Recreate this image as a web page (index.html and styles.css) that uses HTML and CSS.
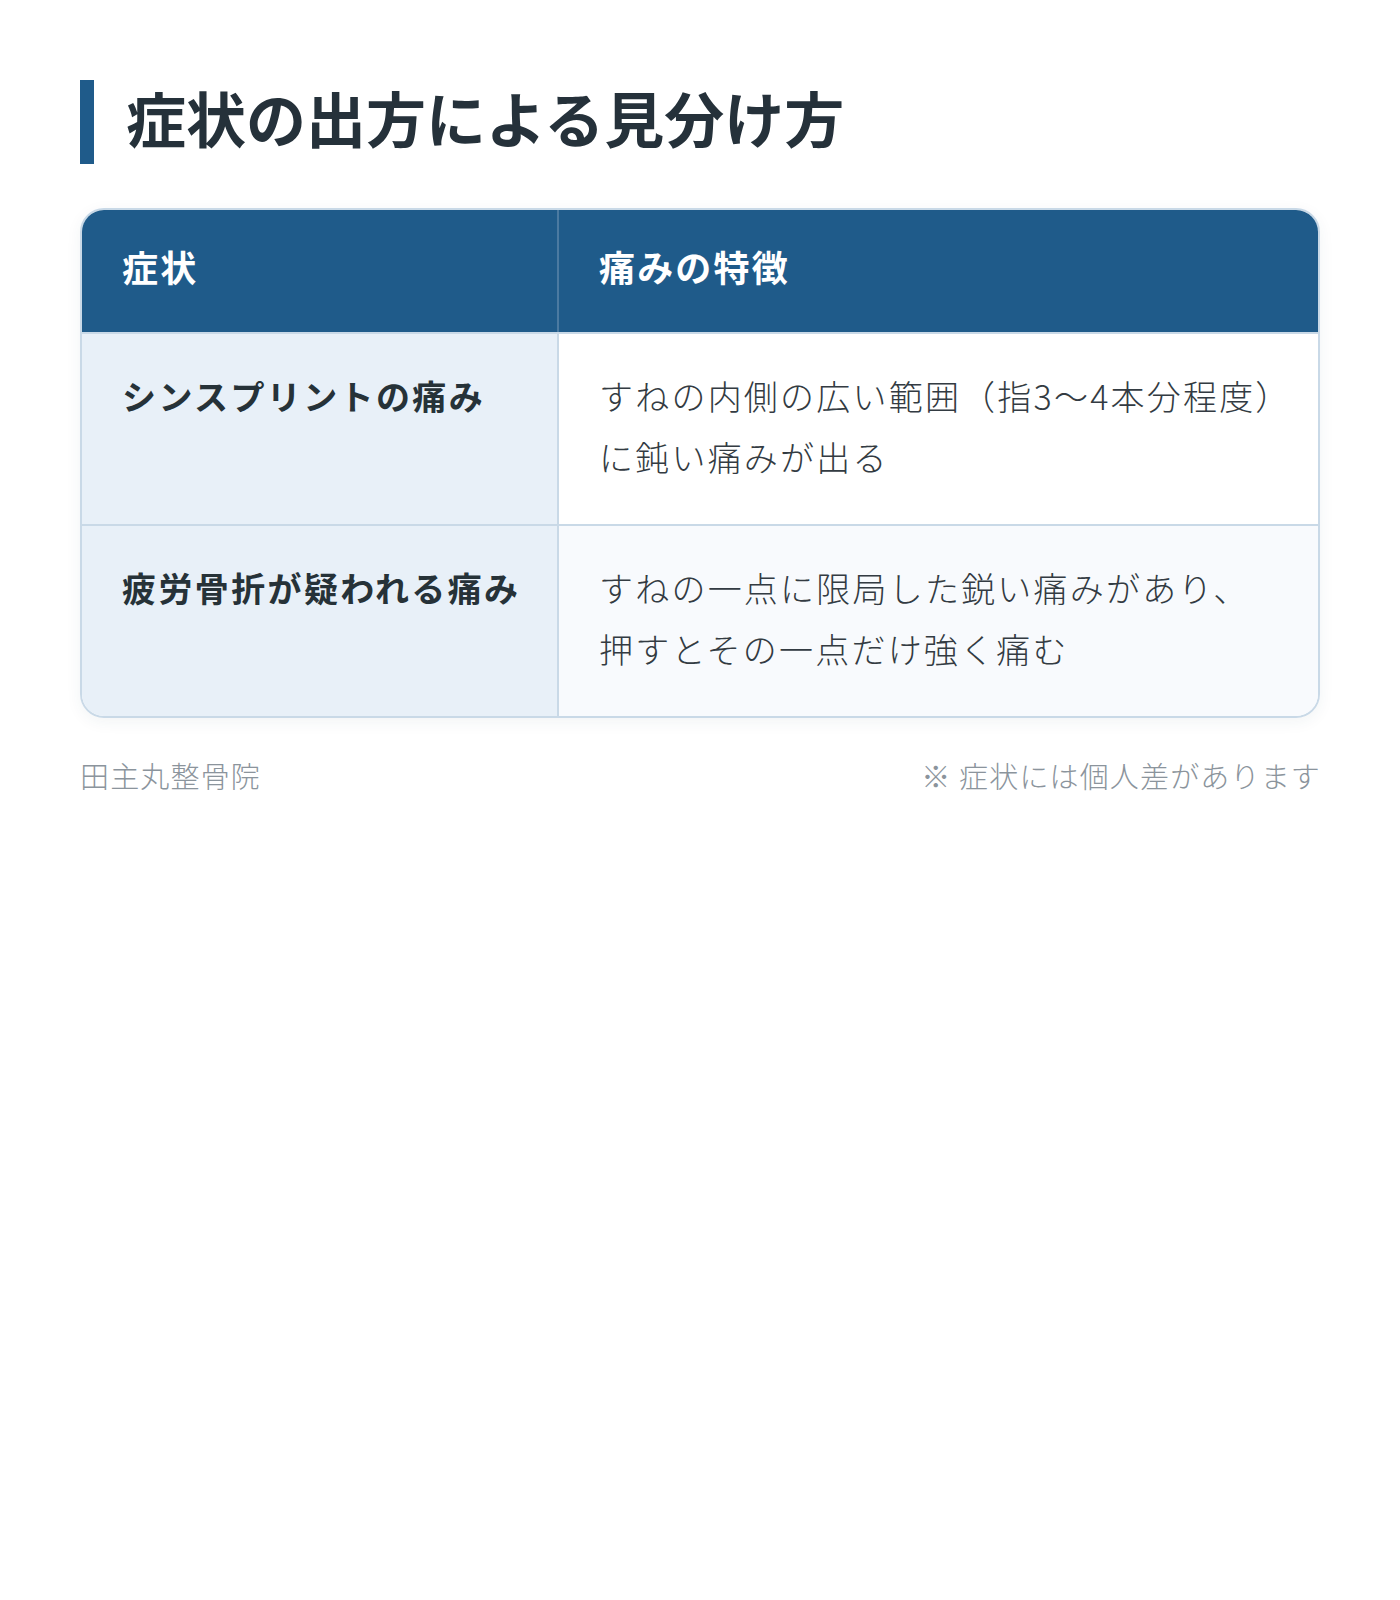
FILE: index.html
```html
<!DOCTYPE html>
<html lang="ja">
<head>
<meta charset="utf-8">
<title>症状の出方による見分け方</title>
<link rel="stylesheet" href="styles.css">
</head>
<body>
<main class="page">
  <h1 class="title">症状の出方による見分け方</h1>
  <div class="table">
    <div class="row head">
      <div class="cell c1">症状</div>
      <div class="cell c2">痛みの特徴</div>
    </div>
    <div class="row">
      <div class="cell c1">シンスプリントの痛み</div>
      <div class="cell c2">すねの内側の広い範囲（指3〜4本分程度）<br>に鈍い痛みが出る</div>
    </div>
    <div class="row alt">
      <div class="cell c1">疲労骨折が疑われる痛み</div>
      <div class="cell c2">すねの一点に限局した鋭い痛みがあり、<br>押すとその一点だけ強く痛む</div>
    </div>
  </div>
  <footer class="foot">
    <span>田主丸整骨院</span>
    <span>※ 症状には個人差があります</span>
  </footer>
</main>
</body>
</html>
```

FILE: styles.css
```css
html, body {
  margin: 0;
  padding: 0;
  background: #ffffff;
}
body {
  font-family: "Noto Sans CJK JP", "Noto Sans", sans-serif;
  color: #263238;
}
.page {
  padding: 80px 80px;
}
.title {
  margin: 0;
  font-size: 60px;
  font-weight: 700;
  line-height: 74px;
  padding: 0 0 10px 32px;
  color: #25313a;
  border-left: 14px solid #1f5b8a;
}
.table {
  margin-top: 44px;
  border: 2px solid #c9d9e7;
  border-radius: 24px;
  overflow: hidden;
  box-shadow: 0 4px 16px rgba(30, 60, 90, 0.06);
}
.row {
  display: grid;
  grid-template-columns: 477px 1fr;
  border-top: 2px solid #c9d9e7;
}
.row.head {
  border-top: none;
  background: #1f5b8a;
}
.cell {
  padding: 31px 20px 37px 40px;
  font-size: 34px;
  line-height: 61px;
  letter-spacing: 0.065em;
  white-space: nowrap;
}
.cell.c1 {
  border-right: 2px solid #c9d9e7;
  background: #e8f0f8;
  font-weight: 700;
  letter-spacing: 0.07em;
  color: #263238;
}
.cell.c2 {
  font-weight: 300;
  color: #333b42;
  background: #ffffff;
}
.row.alt .cell.c2 {
  background: #f8fafd;
}
.row.head .cell {
  background: transparent;
  color: #ffffff;
  font-weight: 700;
  font-size: 36px;
  line-height: 50px;
  letter-spacing: 0.06em;
  padding-bottom: 41px;
  border-right-color: #4b7aa1;
}
.foot {
  margin-top: 35px;
  display: flex;
  justify-content: space-between;
  font-size: 29px;
  line-height: 44px;
  font-weight: 300;
  letter-spacing: 0.04em;
  color: #8b949c;
}
.foot span:last-child {
  margin-right: -1px;
}
```
